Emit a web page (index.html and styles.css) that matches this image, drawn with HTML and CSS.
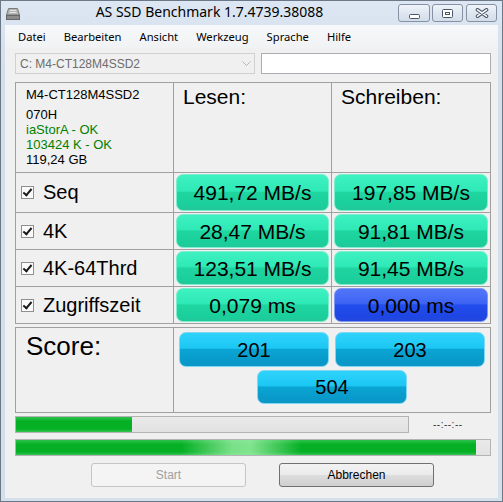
FILE: index.html
```html
<!DOCTYPE html>
<html lang="de">
<head>
    <meta charset="UTF-8">
    <title>AS SSD Benchmark 1.7.4739.38088</title>
    <link rel="stylesheet" href="styles.css">
</head>
<body>
    <div class="window">
        <!-- Titelleiste -->
        <div class="titlebar">
            <svg class="app-icon" width="16" height="16" viewBox="0 0 16 16">
                <path d="M3.5 3.5h9l2 6.5h-13z" fill="#b4b4b4" stroke="#7a7a7a"/>
                <path d="M5 5.5h6M4.5 7.5h7" stroke="#e4e4e4"/>
                <rect x="1.5" y="10.5" width="13" height="4" fill="#8b8b8b" stroke="#666"/>
            </svg>
            <div class="title">AS SSD Benchmark 1.7.4739.38088</div>
            <div class="caption-buttons">
                <div class="cap-btn min">
                    <svg width="11" height="5" viewBox="0 0 11 5"><rect x=".5" y=".5" width="10" height="4" rx="1" fill="#fff" stroke="#4a5566"/></svg>
                </div>
                <div class="cap-btn restore">
                    <svg width="11" height="9" viewBox="0 0 11 9"><rect x=".5" y=".5" width="10" height="8" rx="1" fill="#fff" stroke="#4a5566"/><rect x="3.5" y="3.5" width="4" height="2" fill="none" stroke="#4a5566"/></svg>
                </div>
                <div class="cap-btn close">
                    <svg width="14" height="10" viewBox="0 0 14 10">
                        <path d="M2.5 1.8l9 6.4M11.5 1.8l-9 6.4" stroke="#4a5566" stroke-width="3.6" stroke-linecap="round"/>
                        <path d="M2.5 1.8l9 6.4M11.5 1.8l-9 6.4" stroke="#fff" stroke-width="1.6" stroke-linecap="round"/>
                    </svg>
                </div>
            </div>
        </div>

        <div class="client">
            <ul class="menubar">
                <li>Datei</li>
                <li>Bearbeiten</li>
                <li>Ansicht</li>
                <li>Werkzeug</li>
                <li>Sprache</li>
                <li>Hilfe</li>
            </ul>

            <div class="content">
                <div class="drive-row">
                    <div class="combo disabled">
                        <span>C: M4-CT128M4SSD2</span>
                        <svg width="9" height="5" viewBox="0 0 9 5"><path d="M.5.5l4 4 4-4" fill="none" stroke="#b4b4b4"/></svg>
                    </div>
                    <div class="textbox"></div>
                </div>

                <!-- Ergebnistabelle -->
                <div class="results">
                    <div class="cell drive-info">
                        <div class="model">M4-CT128M4SSD2</div>
                        <div>070H</div>
                        <div class="ok">iaStorA - OK</div>
                        <div class="ok">103424 K - OK</div>
                        <div>119,24 GB</div>
                    </div>
                    <div class="cell head">Lesen:</div>
                    <div class="cell head">Schreiben:</div>

                    <div class="cell test"><span class="check"></span>Seq</div>
                    <div class="cell"><div class="val green">491,72 MB/s</div></div>
                    <div class="cell"><div class="val green">197,85 MB/s</div></div>

                    <div class="cell test"><span class="check"></span>4K</div>
                    <div class="cell"><div class="val green">28,47 MB/s</div></div>
                    <div class="cell"><div class="val green">91,81 MB/s</div></div>

                    <div class="cell test"><span class="check"></span>4K-64Thrd</div>
                    <div class="cell"><div class="val green">123,51 MB/s</div></div>
                    <div class="cell"><div class="val green">91,45 MB/s</div></div>

                    <div class="cell test"><span class="check"></span>Zugriffszeit</div>
                    <div class="cell"><div class="val green">0,079 ms</div></div>
                    <div class="cell"><div class="val blue">0,000 ms</div></div>
                </div>

                <div class="score">
                    <div class="cell score-label">Score:</div>
                    <div class="cell score-values">
                        <div class="val cyan">201</div>
                        <div class="val cyan">203</div>
                        <div class="val cyan total">504</div>
                    </div>
                </div>

                <div class="progress-row">
                    <div class="bar"><div class="fill" style="width: 116px;"></div></div>
                    <span class="time">--:--:--</span>
                </div>
                <div class="bar wide"><div class="fill glow" style="width: 460px;"></div></div>

                <div class="actions">
                    <button class="btn" disabled>Start</button>
                    <button class="btn">Abbrechen</button>
                </div>
            </div>
        </div>
    </div>
</body>
</html>
```

FILE: styles.css
```css
body {
    margin: 0;
    background: #fff;
}
.window {
    width: 503px;
    height: 502px;
    box-sizing: border-box;
    border: 1px solid #6c7887;
    background: linear-gradient(#dde7f3, #d4dfec 60px, #d4dfec);
    display: flex;
    flex-direction: column;
    font-family: "Liberation Sans", Arial, sans-serif;
    color: #000;
}

/* Titelleiste */
.titlebar {
    height: 24px;
    display: flex;
    align-items: flex-start;
    padding: 0 5px 0 4px;
}
.app-icon {
    margin-top: 4px;
    flex-shrink: 0;
}
.title {
    flex: 1;
    text-align: center;
    font-family: "Noto Sans", sans-serif;
    font-size: 14px;
    line-height: 24px;
    margin-top: -1px;
}
.caption-buttons {
    display: flex;
    gap: 2px;
    margin-top: 3px;
}
.cap-btn {
    width: 32px;
    height: 18px;
    box-sizing: border-box;
    border: 1px solid #8592a4;
    border-radius: 3px;
    background: linear-gradient(#f0f4f9, #dfe7f1 50%, #d3dde9);
    display: flex;
    align-items: center;
    justify-content: center;
}
.cap-btn.min svg {
    margin-top: 6px;
}
.cap-btn.restore,
.cap-btn.close {
    width: 31px;
}
.cap-btn.close {
    margin-left: 1px;
}

/* Fensterinhalt */
.client {
    flex: 1;
    margin: 0 4px 3px 4px;
    background: #f0f0f0;
}
.menubar {
    list-style: none;
    margin: 0;
    padding: 0 0 0 4px;
    height: 23px;
    display: flex;
    align-items: center;
    background: linear-gradient(#f7f8fa, #f1f2f4);
    font-family: "Noto Sans", sans-serif;
    font-size: 11.2px;
}
.menubar li {
    padding: 0 9px;
}
.content {
    padding-left: 10px;
    width: 476px;
}

.drive-row {
    display: flex;
    gap: 6px;
    margin-top: 5px;
    height: 21px;
}
.combo {
    width: 240px;
    box-sizing: border-box;
    border: 1px solid #d0d0d0;
    background: #f0f0f0;
    display: flex;
    align-items: center;
    justify-content: space-between;
    padding: 0 3px 0 4px;
    font-size: 12px;
    color: #6d6d6d;
}
.textbox {
    flex: 1;
    border: 1px solid #abadb3;
    background: #fff;
}

/* Tabellen mit Zellrahmen */
.results,
.score {
    display: grid;
    gap: 1px;
    padding: 1px;
    background: #a0a0a0;
}
.results {
    margin-top: 8px;
    grid-template-columns: 157px 157px 158px;
    grid-template-rows: 89px 39px 36px 36px 36px;
}
.score {
    margin-top: 3px;
    grid-template-columns: 157px 316px;
    grid-template-rows: 84px;
}
.cell {
    background: #f0f0f0;
    display: flex;
    min-width: 0;
}
.drive-info {
    flex-direction: column;
    padding: 4px 0 0 10px;
    font-size: 13px;
    line-height: 15px;
}
.drive-info .model {
    margin-bottom: 5px;
}
.drive-info .ok {
    color: #008000;
}
.head {
    font-size: 21px;
    line-height: 25px;
    padding: 1px 0 0 9px;
}
.test {
    align-items: center;
    padding-left: 5px;
    font-size: 20px;
}
.check {
    width: 13px;
    height: 13px;
    box-sizing: border-box;
    border: 1px solid #8e8f8f;
    background: #fbfbfb;
    margin-right: 9px;
    position: relative;
}
.check::after {
    content: "";
    position: absolute;
    left: 3px;
    top: 0;
    width: 3px;
    height: 7px;
    border: solid #1a1a1a;
    border-width: 0 2px 2px 0;
    transform: rotate(40deg);
}

/* Wertefelder */
.val {
    flex: 1;
    margin: 1px 2px;
    box-sizing: border-box;
    border-radius: 7px;
    display: flex;
    align-items: center;
    justify-content: center;
    font-size: 21px;
    padding-top: 1px;
}
.val.green {
    border: 1px solid #7cedcd;
    background: linear-gradient(#3ff1c1, #2ee9b6 46%, #1fd5a0 50%, #1bcf9b 86%, #22c799);
}
.val.blue {
    border: 1px solid #8098f4;
    background: linear-gradient(#5275f7, #3d63f4 46%, #224ceb 50%, #1e46e4 86%, #2448dc);
}
.val.cyan {
    border: 1px solid #7fd6f3;
    background: linear-gradient(#2fd3fb, #1cc7f4 46%, #0aa5d4 50%, #0899c9 86%, #0c97c6);
    flex: none;
    width: 150px;
    height: 35px;
    margin: 0;
    font-size: 20px;
}
.score-label {
    font-size: 26px;
    line-height: 30px;
    padding: 3px 0 0 10px;
}
.score-values {
    flex-wrap: wrap;
    justify-content: center;
    align-content: flex-start;
    gap: 3px 6px;
    padding-top: 4px;
}
.val.total {
    height: 34px;
}

/* Fortschrittsbalken */
.progress-row {
    display: flex;
    align-items: center;
    margin-top: 3px;
}
.bar {
    width: 394px;
    height: 17px;
    box-sizing: border-box;
    border: 1px solid #b4b4b4;
    background: linear-gradient(#eaeaea, #e2e2e2);
}
.bar.wide {
    width: 476px;
    margin-top: 6px;
}
.fill {
    height: 100%;
    background: linear-gradient(#2cc24a, #06b025 30%, #06b025 80%, #36c454);
}
.fill.glow {
    background:
        linear-gradient(90deg, transparent 36%, rgba(160, 240, 170, 0.75) 47%, rgba(160, 240, 170, 0.8) 51%, transparent 62%),
        linear-gradient(#2cc24a, #06b025 30%, #06b025 80%, #36c454);
}
.time {
    margin-left: 24px;
    font-size: 10px;
    color: #333;
    letter-spacing: 0.5px;
}

/* Knöpfe */
.actions {
    display: flex;
    gap: 33px;
    margin-top: 7px;
    padding-left: 76px;
}
.btn {
    width: 155px;
    height: 24px;
    border: 1px solid #707070;
    border-radius: 3px;
    background: linear-gradient(#f2f2f2, #ebebeb 50%, #dddddd 51%, #cfcfcf);
    font-family: "Liberation Sans", Arial, sans-serif;
    font-size: 12px;
    color: #000;
    padding: 0;
}
.btn:disabled {
    border-color: #c5c5c5;
    background: #f4f4f4;
    color: #a0a0a0;
}
```
